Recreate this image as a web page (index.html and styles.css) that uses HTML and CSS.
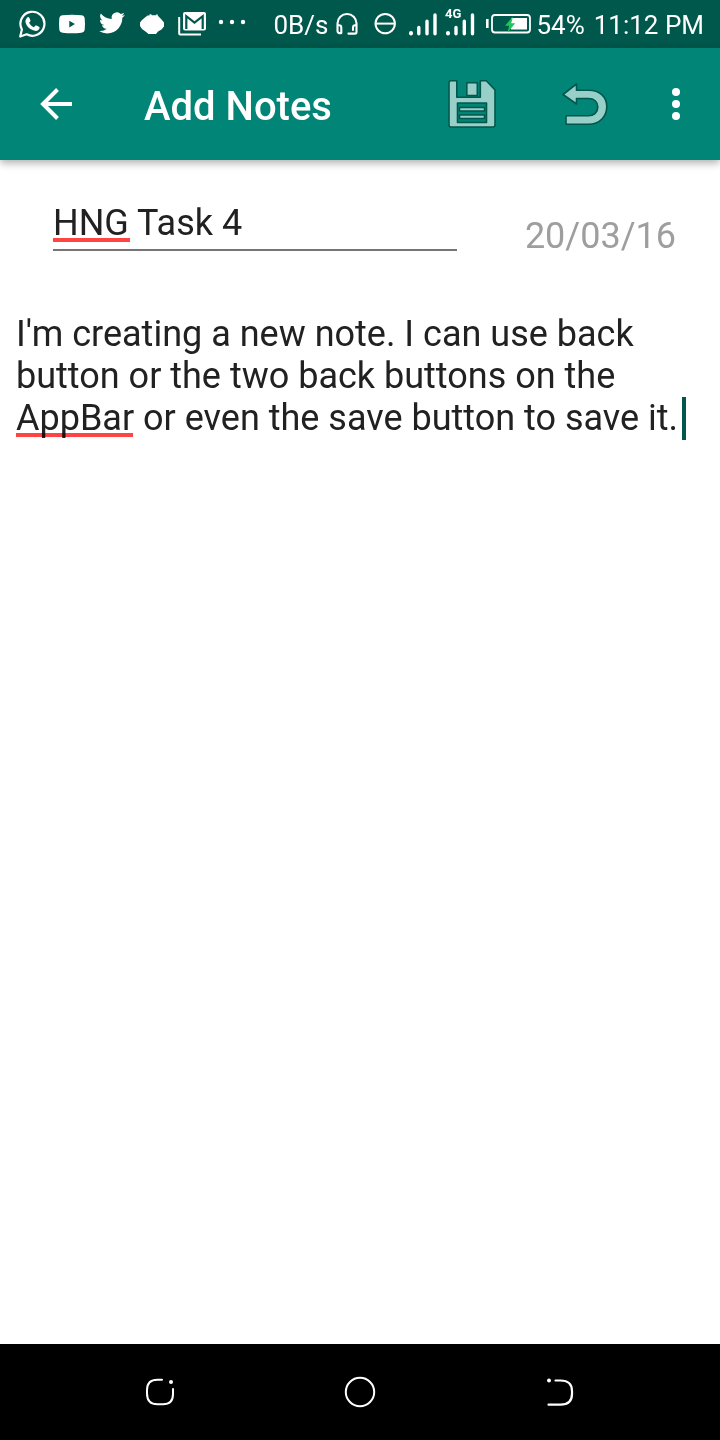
FILE: index.html
```html
<!DOCTYPE html>
<html lang="en">
<head>
<meta charset="utf-8">
<meta name="viewport" content="width=device-width, initial-scale=1">
<title>Add Notes</title>
<link rel="stylesheet" href="styles.css">
</head>
<body>
<div class="screen">
  <div class="status">
    <div class="status-apps">
      <svg width="28" height="28" viewBox="0 0 28 28" aria-label="WhatsApp"><path d="M2.200 26.500l1.700-7A12 12 0 1 1 8.700 24.300z" fill="none" stroke="#fff" stroke-width="2.200" stroke-linejoin="round"/><path d="M9.400 7.400c.5-.5 1.400-.5 1.800.2l1.200 2.600c.2.6 0 1.100-.4 1.500l-.9 1c1.200 2.200 2.700 3.600 4.900 4.500l1.200-1.400c.3-.4.800-.5 1.300-.3l2.400 1.200c.7.3.8.9.6 1.600-.6 2-2.600 2.900-4.600 2.500-4.900-1-8.400-4.300-9.400-8.500-.4-1.900.5-3.700 1.900-4.900z" fill="#fff"/></svg>
      <svg width="28" height="28" viewBox="0 0 28 28" aria-label="YouTube"><path fill="#fff" fill-rule="evenodd" d="M4.500 5.300Q14 4.300 23.500 5.300 26.400 5.700 26.700 8.500 27.300 14 26.700 19.500 26.400 22.300 23.500 22.700 14 23.700 4.500 22.700 1.600 22.300 1.300 19.500.7 14 1.300 8.500 1.600 5.700 4.500 5.300zM11.300 10.800v6.600l5.600-3.300z"/></svg>
      <svg width="28" height="28" viewBox="-1 0 26 26" aria-label="Twitter"><path fill="#fff" d="M23.953 4.570a10 10 0 01-2.825.775 4.958 4.958 0 002.163-2.723c-.951.555-2.005.959-3.127 1.184a4.920 4.920 0 00-8.384 4.482C7.690 8.095 4.067 6.130 1.640 3.162a4.822 4.822 0 00-.666 2.475c0 1.710.870 3.213 2.188 4.096a4.904 4.904 0 01-2.228-.616v.060a4.923 4.923 0 003.946 4.827 4.996 4.996 0 01-2.212.085 4.936 4.936 0 004.604 3.417 9.867 9.867 0 01-6.102 2.105c-.390 0-.779-.023-1.170-.067a13.995 13.995 0 007.557 2.209c9.053 0 13.998-7.496 13.998-13.985 0-.210 0-.420-.015-.630A9.935 9.935 0 0024 4.590z"/></svg>
      <svg width="28" height="28" viewBox="0 0 28 28" aria-label="App notification"><path fill="#fff" d="M2 12.500L4 10l3-2.500L9.500 5.500 11.500 5.500V4.300h1.600l.8 1h3.800l1.400-1.300 1 2L23.500 9.500l2.500 3v4l-2.500 3-3.500 2-2 2.500h-7.500L7.500 21.500 4 19 2 16z"/></svg>
      <svg width="28" height="28" viewBox="0 0 28 28" aria-label="Gmail"><path d="M1.200 7v16.600q0 1 1 1h20.800" fill="none" stroke="#fff" stroke-width="2"/><rect x="5" y="2" width="23" height="18.500" rx="2" fill="#fff"/><path d="M8.300 19V6.200L16.500 12.500 24.700 6.200V19" fill="none" stroke="#00574b" stroke-width="2.200"/></svg>
      <svg width="28" height="28" viewBox="0 0 28 28" aria-label="More notifications"><g fill="#fff"><circle cx="3" cy="12" r="2.200"/><circle cx="14" cy="12" r="2.200"/><circle cx="25" cy="12" r="2.200"/></g></svg>
    </div>
    <div class="status-system">
      <span class="status-text">0B/s</span>
      <svg class="headset" width="24" height="28" viewBox="0 0 24 28" aria-label="Headset"><path d="M2.500 16V13.500a9.500 9.500 0 0 1 19 0V22q0 1.600-1.600 1.600h-6.500M2.500 15.200h1.500q2.300 0 2.300 2.300v5.600H4.700q-2.200 0-2.200-2.200V15M21.500 15.200h-1.300q-2.200 0-2.200 2.300v2.500" fill="none" stroke="#fff" stroke-width="2.100" stroke-linejoin="round" stroke-linecap="round"/></svg>
      <svg class="dnd" width="24" height="28" viewBox="0 0 24 28" aria-label="Do not disturb"><g fill="none" stroke="#fff" stroke-width="2"><circle cx="12.200" cy="13.600" r="9.700"/><path d="M3 13.600h18.400"/></g></svg>
      <svg class="signal" width="30" height="28" viewBox="0 0 30 28" aria-label="Signal"><g stroke="#fff" stroke-width="4" stroke-linecap="round"><path d="M3 23v.5"/><path d="M10.800 17.500v6.200M19 11.300v12.400M27 5v18.700" stroke-width="3.400"/></g></svg>
      <svg class="signal-4g" width="32" height="36" viewBox="0 -2 32 36" aria-label="4G signal"><g stroke="#fff" stroke-width="4" stroke-linecap="round"><path d="M4 25v.5"/><path d="M12 19.500v6.200M20.300 13.300v12.400M28.500 7v18.700" stroke-width="3.400"/></g><text x="1" y="10" class="network">4G</text></svg>
      <svg class="battery" width="46" height="28" viewBox="0 0 46 28" aria-label="Battery charging"><path d="M0 9h2.600v9H0z" fill="#fff"/><rect x="6" y="5" width="38" height="17.500" rx="3" fill="none" stroke="#fff" stroke-width="1.800"/><path d="M25 8h16v11.500H25z" fill="#fff"/><path d="M27 6.500l-8 9.200h4.200l-1.700 7 7.700-9.400h-4z" fill="#20c65a"/></svg>
      <span class="status-text">54%</span>
      <span class="status-text clock">11:12 PM</span>
    </div>
  </div>

  <header class="appbar">
    <button class="icon-button" type="button" aria-label="Back"><svg width="32" height="32" viewBox="0 0 32 32"><path d="M32 16H3M17.500 1.500L3 16l14.500 14.500" fill="none" stroke="#fff" stroke-width="4"/></svg></button>
    <h1 class="appbar-title">Add Notes</h1>
    <button class="icon-button save" type="button" aria-label="Save"><svg width="48" height="50" viewBox="0 0 48 50"><g fill="#98cfc9" stroke="#00574b" stroke-width="1.600" stroke-linejoin="round"><path fill-rule="evenodd" d="M3 1.800h5.800v16.500h23.500V1.800h6L47 11v35q0 2-2 2H3q-2 0-2-2V3.800q0-2 2-2zM9.500 24v19.500h29V24z"/><path d="M18.800 3.800h10.500v12.700H18.800zM11.500 28.500h25V32h-25zM11.500 36h25v3.500h-25z"/></g></svg></button>
    <button class="icon-button undo" type="button" aria-label="Undo"><svg width="46" height="44" viewBox="0 0 46 44"><path d="M1 12.500L14.500 2v6.200h12C38 8.200 44.800 15 44.800 24.500S38 42.300 26.500 42.300H4v-8.500h22.500c5.500 0 9.300-3.500 9.300-8.800s-3.800-8.500-9.300-8.500h-12V22z" fill="#98cfc9" stroke="#00574b" stroke-width="1.600" stroke-linejoin="round"/></svg></button>
    <button class="icon-button more" type="button" aria-label="More options"><svg width="8" height="32" viewBox="0 0 8 32"><g fill="#fff"><circle cx="4" cy="4" r="4"/><circle cx="4" cy="16" r="4"/><circle cx="4" cy="28" r="4"/></g></svg></button>
  </header>

  <main class="note">
    <div class="note-head">
      <div class="title-field">
        <input class="title-input" type="text" value="HNG Task 4" aria-label="Note title" spellcheck="false">
        <span class="spelling spelling-title"></span>
      </div>
      <time class="note-date">20/03/16</time>
    </div>
    <div class="body-field">
      <textarea class="body-input" aria-label="Note text" spellcheck="false">I'm creating a new note. I can use back button or the two back buttons on the AppBar or even the save button to save it.</textarea>
      <span class="spelling spelling-body"></span>
      <span class="caret"></span>
    </div>
  </main>

  <nav class="navbar" aria-label="System navigation">
    <button class="icon-button" type="button" aria-label="Recent apps"><svg width="32" height="32" viewBox="0 0 32 32"><path d="M18 3.700h-4.500Q3 3.700 3 14v3.500Q3 28.300 13.500 28.300h5.500Q29 28.300 29 18v-5" fill="none" stroke="#fff" stroke-width="2" stroke-linecap="round"/><circle cx="27" cy="6" r="2" fill="#fff"/></svg></button>
    <button class="icon-button" type="button" aria-label="Home"><svg width="32" height="32" viewBox="0 0 32 32"><circle cx="16" cy="16" r="14.200" fill="none" stroke="#fff" stroke-width="2"/></svg></button>
    <button class="icon-button" type="button" aria-label="Back"><svg width="32" height="32" viewBox="0 0 32 32"><path d="M11.500 4.500h5Q28 4.500 28 15v3q0 10.700-11.500 10.700H4.500" fill="none" stroke="#fff" stroke-width="2.200" stroke-linecap="round"/><circle cx="5" cy="4.500" r="2" fill="#fff"/></svg></button>
  </nav>
</div>
</body>
</html>
```

FILE: styles.css
```css
* {
  box-sizing: border-box;
}

body {
  margin: 0;
  font-family: Roboto, sans-serif;
  color: #212121;
  background: #fff;
}

svg {
  display: block;
  flex: none;
}

.screen {
  display: flex;
  flex-direction: column;
  min-height: 100vh;
}

.status {
  display: flex;
  align-items: center;
  justify-content: space-between;
  height: 48px;
  padding: 0 16px 0 18px;
  background: #00574b;
  color: #fff;
  font-size: 26px;
  line-height: 32px;
  white-space: nowrap;
}

.status-apps,
.status-system {
  display: flex;
  align-items: center;
}

.status-apps {
  gap: 12px;
}

.status-text {
  padding-top: 2px;
}

.headset {
  margin-left: 7px;
}

.dnd {
  margin-left: 14px;
}

.signal {
  margin-left: 11px;
}

.signal-4g {
  margin-left: 6px;
}

.network {
  font: 700 13px Roboto, sans-serif;
  fill: #fff;
}

.battery {
  margin: 0 4px 0 10px;
}

.clock {
  margin-left: 9px;
}

.icon-button {
  display: grid;
  place-items: center;
  padding: 0;
  border: 0;
  background: none;
  cursor: pointer;
}

.appbar {
  display: flex;
  align-items: center;
  height: 112px;
  padding: 0 40px;
  background: #008577;
  color: #fff;
  box-shadow: 0 3px 8px rgba(0, 0, 0, 0.32);
}

.appbar-title {
  flex: 1;
  margin: 6px 0 0 72px;
  font-size: 40px;
  font-weight: 500;
  line-height: 48px;
}

.undo {
  margin-left: 66px;
}

.more {
  margin-left: 64px;
}

.note {
  display: flex;
  flex: 1;
  flex-direction: column;
  gap: 62px;
  padding: 40px 16px 16px;
}

.note-head {
  display: flex;
  align-items: flex-end;
  gap: 68px;
  padding: 0 28px 0 37px;
}

.title-field,
.body-field {
  position: relative;
  flex: 1;
}

.title-field {
  min-width: 0;
}

.body-field {
  display: flex;
}

.title-input,
.body-input {
  display: block;
  width: 100%;
  padding: 0;
  border: 0;
  outline: 0;
  background: none;
  color: inherit;
  font: 36px/42px Roboto, sans-serif;
}

.title-input {
  height: 51px;
  padding-bottom: 4px;
  border-bottom: 2px solid #757575;
}

.body-input {
  resize: none;
}

.note-date {
  color: #9e9e9e;
  font-size: 36px;
  line-height: 42px;
  margin-bottom: -6px;
}

.spelling {
  position: absolute;
  left: 0;
  height: 4px;
  background: #ff4444;
  mix-blend-mode: multiply;
}

.spelling-title {
  top: 38px;
  width: 77px;
}

.spelling-body {
  top: 120px;
  width: 117px;
}

.caret {
  position: absolute;
  top: 84px;
  left: 666px;
  width: 4px;
  height: 43px;
  background: #00574b;
}

.navbar {
  display: grid;
  grid-template-columns: repeat(3, 200px);
  justify-content: center;
  align-items: center;
  height: 96px;
  background: #000;
}
```
